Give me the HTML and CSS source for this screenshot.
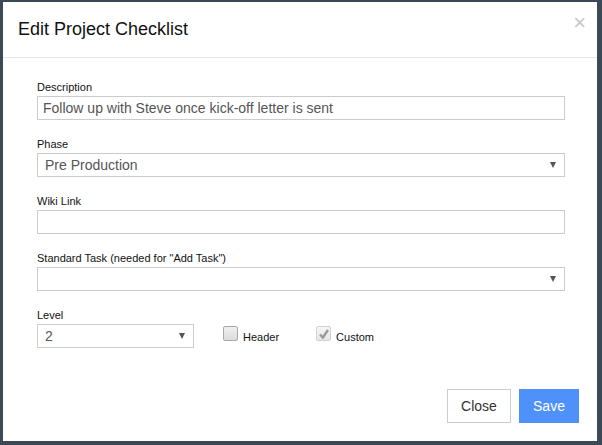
FILE: index.html
```html
<!DOCTYPE html>
<html lang="en">
<head>
  <meta charset="UTF-8" />
  <title>Edit Project Checklist</title>
  <link rel="stylesheet" href="styles.css">
</head>
<body>
  <div class="modal">
    <div class="modal-header">
      <h4 class="modal-title">Edit Project Checklist</h4>
      <button type="button" class="close">&times;</button>
    </div>

    <form class="modal-body">
      <div class="form-group">
        <label for="description">Description</label>
        <input type="text" id="description" class="form-control" value="Follow up with Steve once kick-off letter is sent">
      </div>

      <div class="form-group">
        <label for="phase">Phase</label>
        <div class="select-wrap">
          <select id="phase" class="form-control">
            <option>Pre Production</option>
          </select>
          <span class="caret"></span>
        </div>
      </div>

      <div class="form-group">
        <label for="wiki">Wiki Link</label>
        <input type="text" id="wiki" class="form-control">
      </div>

      <div class="form-group">
        <label for="task">Standard Task (needed for "Add Task")</label>
        <div class="select-wrap">
          <select id="task" class="form-control">
            <option></option>
          </select>
          <span class="caret"></span>
        </div>
      </div>

      <div class="form-group">
        <label for="level">Level</label>
        <div class="level-row">
          <div class="select-wrap level">
            <select id="level" class="form-control">
              <option>2</option>
            </select>
            <span class="caret"></span>
          </div>
          <label class="check">
            <span class="box"></span>
            <span class="check-text">Header</span>
          </label>
          <label class="check disabled">
            <span class="box">
              <svg width="12" height="12" viewBox="0 0 12 12"><path d="M2 6.5 L4.8 9.5 L10 2" fill="none" stroke="#999" stroke-width="2.4"/></svg>
            </span>
            <span class="check-text">Custom</span>
          </label>
        </div>
      </div>
    </form>

    <div class="modal-footer">
      <button type="button" class="btn btn-default">Close</button>
      <button type="button" class="btn btn-primary">Save</button>
    </div>
  </div>
</body>
</html>
```

FILE: styles.css
```css
/* Page behind the dialog */
body {
  margin: 0;
  background: #3b4856;
  font-family: "Liberation Sans", Arial, sans-serif;
  color: #000;
}

/* Dialog */
.modal {
  margin: 2px 5px 4px 3px;
  width: 594px;
  height: 439px;
  background: #fff;
  display: flex;
  flex-direction: column;
}

.modal-header {
  height: 55px;
  border-bottom: 1px solid #e5e5e5;
  padding: 0 15px;
  display: flex;
  align-items: center;
  justify-content: space-between;
}

.modal-title {
  margin: 0;
  font-size: 18px;
  font-weight: normal;
  color: #111;
}

.close {
  background: none;
  border: none;
  padding: 0;
  margin-top: -14px;
  margin-right: -4px;
  font-family: "Liberation Sans", Arial, sans-serif;
  font-size: 22px;
  line-height: 1;
  color: #c8c8c8;
}

/* Form */
.modal-body {
  flex: 1;
  padding: 22px 32px 0 34px;
}

.form-group {
  margin-bottom: 17px;
}

.form-group > label {
  display: block;
  font-size: 11px;
  line-height: 15px;
  margin-bottom: 1px;
  color: #111;
}

.form-control {
  display: block;
  box-sizing: border-box;
  width: 100%;
  height: 24px;
  margin: 0;
  padding: 0 5px;
  border: 1px solid #ccc;
  border-radius: 0;
  background: #fff;
  font-family: "Liberation Sans", Arial, sans-serif;
  font-size: 14px;
  color: #555;
  outline: none;
}

select.form-control {
  appearance: none;
  -webkit-appearance: none;
  padding-left: 7px;
}

.select-wrap {
  position: relative;
}

.caret {
  position: absolute;
  right: 9px;
  top: 9px;
  border-left: 3px solid transparent;
  border-right: 3px solid transparent;
  border-top: 6px solid #555;
  pointer-events: none;
}

.level-row {
  display: flex;
  align-items: flex-start;
}

.select-wrap.level {
  width: 157px;
}

.check {
  display: flex;
  align-items: flex-start;
  margin-left: 29px;
  margin-top: 2px;
  font-size: 11px;
  color: #111;
}

.check + .check {
  margin-left: 37px;
}

.box {
  box-sizing: border-box;
  width: 15px;
  height: 15px;
  border: 1px solid #a9a9a9;
  border-radius: 2px;
  background: linear-gradient(#f0f0f0, #dcdcdc);
  display: flex;
  align-items: center;
  justify-content: center;
}

.check.disabled .box {
  border-color: #d0d0d0;
  background: linear-gradient(#f6f6f6, #e6e6e6);
}

.check-text {
  margin-left: 5px;
  margin-top: 5px;
}

/* Footer */
.modal-footer {
  display: flex;
  justify-content: flex-end;
  gap: 8px;
  padding: 0 18px 18px 0;
}

.btn {
  height: 34px;
  padding: 0;
  font-family: "Liberation Sans", Arial, sans-serif;
  font-size: 14px;
  border-radius: 0;
  cursor: pointer;
}

.btn-default {
  width: 64px;
  background: #fff;
  border: 1px solid #ccc;
  color: #333;
}

.btn-primary {
  width: 60px;
  background: #4f91fb;
  border: 1px solid #4f91fb;
  color: #fff;
}
```
